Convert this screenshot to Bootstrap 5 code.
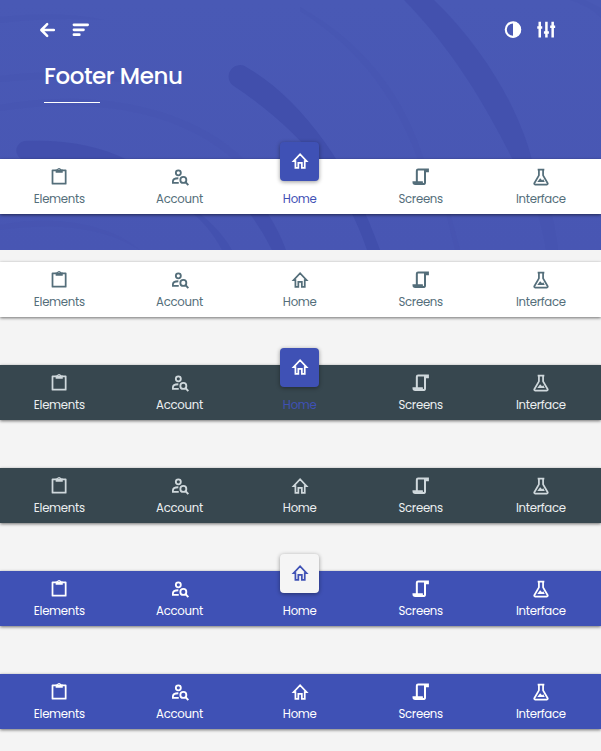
<!DOCTYPE html>
<html lang="en">
<head>
<meta charset="utf-8">
<meta name="viewport" content="width=device-width, initial-scale=1">
<title>Footer Menu</title>
<link href="https://cdn.jsdelivr.net/npm/bootstrap@5.3.0/dist/css/bootstrap.min.css" rel="stylesheet">
<style>
body{background:#f4f4f4;font-family:Poppins,Inter,sans-serif;overflow:hidden;height:751px}
.hero{height:250px;background:linear-gradient(#4959b5,#4856b3);margin-bottom:12px}
.hero-art{position:absolute;inset:0;z-index:0}
.hero-body{position:relative;z-index:1}
.tools{height:60px;padding:0 45px 0 38px}
.tools svg{width:20px;height:20px}
.tools-right{gap:13px}
.tools-left{gap:13px}
.page-title{font-size:23px;font-weight:500;line-height:32px;letter-spacing:-.42px;margin:0 0 10px 44px}
.rule{width:56px;height:1px;background:#fff;margin-left:44px}
.menu-bar{height:55px;margin-bottom:48px;box-shadow:0 1px 3px rgba(0,0,0,.55);background:#fff;color:#546e7a}
.hero .menu-bar{margin:56px 0 0}
.menu-item{width:20%;padding-top:8px;font-size:11.7px;line-height:18px;letter-spacing:-.27px;color:inherit;text-decoration:none}
.menu-item:nth-child(-n+3){padding-right:1.500px}
.menu-item svg{width:20px;height:20px;display:block;margin-bottom:3px}
.bar-dark{background:#37474f;color:#eceff1}
.bar-dark .menu-item svg{color:#cfd8dc}
.bar-blue{background:#3f51b5;color:#fff}
.menu-item .tile{width:39px;height:39px;border-radius:4px;margin:-25px 0 9px;background:#3f51b5;box-shadow:0 1px 4px rgba(0,0,0,.4)}
.menu-item .tile svg,.bar-dark .tile svg{color:#fff;margin:0 0 2px}
.menu-item.chosen{color:#3f51b5}
.bar-blue .menu-item.chosen{color:#fff}
.bar-blue .tile{background:#f5f5f5}
.bar-blue .tile svg{color:#3f51b5}
</style>
<script src="https://cdn.jsdelivr.net/npm/bootstrap@5.3.0/dist/js/bootstrap.bundle.min.js"></script>
</head>
<body>
<svg width="0" height="0" class="position-absolute" aria-hidden="true">
<symbol id="clip" viewBox="0 0 24 24"><path fill="none" stroke="currentColor" stroke-width="2.100" stroke-linejoin="round" d="M4.200 4H20V20H4.200Z"/><path fill="currentColor" d="M8 3h1.600a2.600 2.600 0 0 1 5 0H16.500V7H8zM12 2.300a1 1 0 1 0 0 2 1 1 0 0 0 0-2" fill-rule="evenodd"/></symbol>
<symbol id="acct" viewBox="0 0 24 24"><g fill="none" stroke="currentColor" stroke-width="2.200"><circle cx="10" cy="7" r="3"/><path d="M10 13.500C6 13.500 3.500 15 3.500 17V19h7"/><circle cx="16" cy="15.500" r="3.600"/><path d="M18.500 18l3.500 3.700"/></g></symbol>
<symbol id="home" viewBox="0 0 24 24"><path fill="none" stroke="currentColor" stroke-width="2.100" d="M4.300 12.200H6.500V20.200h3.500v-6h4.200v6h3.500v-8h2.200L12.100 3.800z"/></symbol>
<symbol id="script" viewBox="0 0 24 24"><path fill="none" stroke="currentColor" stroke-width="2.400" d="M7 17V4.500Q7 3 8.500 3H20.300v2H16.800V18.500Q16.800 20.500 14.500 20.500H5Q3 20.500 3 18.300H13Q13 20 14.500 20.500"/></symbol>
<symbol id="flask" viewBox="0 0 24 24"><g fill="none" stroke="currentColor" stroke-width="2.100" stroke-linejoin="round"><path d="M8 3h8M9.500 3v7L4 19.500A1 1 0 0 0 5 21h14a1 1 0 0 0 1-1.500L14.500 10V3"/></g><path fill="currentColor" d="M7.500 18l3.500-4.500 2.300 2.300 1.500-1.100 1.700 3.300z"/></symbol>
</svg>

<header class="hero position-relative text-white">
<svg class="hero-art" width="601" height="250" viewBox="0 0 601 250" aria-hidden="true">
<path fill="#414fac" d="M247 67.500C300 98 350 165 380 250H367C345 184 300 130 233 85.500A10.500 10.500 0 0 1 247 67.500Z"/>
<path fill="#414fac" opacity=".75" d="M404 0H434C486 50 520 112 532 160H513C486 107 455 52 404 0Z"/>
<path fill="#414fac" opacity=".3" d="M532 160C546 185 555 220 558 250H546C541 220 532 190 513 160Z"/>
<path fill="#414fac" opacity=".9" d="M24 141C65 139 100 146 128 160H28A7.500 7.500 0 0 1 24 141ZM250 214H268Q279 231 286 250H272Q262 230 250 214Z"/>
<path fill="#414fac" opacity=".18" d="M0 105C90 88 190 105 245 160H234C175 108 90 98 0 111ZM0 76C60 68 120 75 180 88 110 79 60 76 0 82ZM0 17Q60 11 105 20 50 17 0 23Z"/>
<path fill="#414fac" opacity=".18" d="M300 7C370 47 405 100 424 160H418C398 105 365 52 300 11ZM570 0Q590 6 601 18V8L585 0ZM448 205L460 250H455L444 205ZM0 225C45 216 105 220 140 250 100 225 50 223 0 230Z"/>
<path fill="#414fac" opacity=".6" d="M188 205Q218 225 232 250H222Q207 222 182 205Z"/>
</svg>
<div class="hero-body">
<div class="tools d-flex align-items-center justify-content-between">
<div class="tools-left d-flex align-items-center">
<svg viewBox="0 0 24 24" fill="none" stroke="currentColor" stroke-width="3" stroke-linecap="round" stroke-linejoin="round"><path d="M19 12H4.500M11 5L4 12l7 7"/></svg>
<svg viewBox="0 0 24 24" fill="none" stroke="currentColor" stroke-width="3.200" stroke-linecap="round"><path d="M3.500 5.800H20M3.500 11.800h11.500M3.500 17.600h6.500"/></svg>
</div>
<div class="tools-right d-flex align-items-center">
<svg viewBox="0 0 24 24"><circle cx="12" cy="11.500" r="8.700" fill="none" stroke="currentColor" stroke-width="2.500"/><path fill="currentColor" d="M12 2a9.500 9.500 0 0 1 0 19z"/></svg>
<svg viewBox="0 0 24 24" fill="none" stroke="currentColor" stroke-width="3"><path d="M4.500 2v19M12.500 2v19M20 2v19M1.500 9h6M9.500 15h6M17 8h6"/></svg>
</div>
</div>
<h1 class="page-title">Footer Menu</h1>
<div class="rule"></div>
<nav class="menu-bar d-flex">
<a class="menu-item d-flex flex-column align-items-center"><svg><use href="#clip"/></svg><span>Elements</span></a>
<a class="menu-item d-flex flex-column align-items-center"><svg><use href="#acct"/></svg><span>Account</span></a>
<a class="menu-item chosen d-flex flex-column align-items-center"><span class="tile d-flex align-items-center justify-content-center"><svg><use href="#home"/></svg></span><span>Home</span></a>
<a class="menu-item d-flex flex-column align-items-center"><svg><use href="#script"/></svg><span>Screens</span></a>
<a class="menu-item d-flex flex-column align-items-center"><svg><use href="#flask"/></svg><span>Interface</span></a>
</nav>
</div>
</header>
<nav class="menu-bar d-flex">
<a class="menu-item d-flex flex-column align-items-center"><svg><use href="#clip"/></svg><span>Elements</span></a>
<a class="menu-item d-flex flex-column align-items-center"><svg><use href="#acct"/></svg><span>Account</span></a>
<a class="menu-item d-flex flex-column align-items-center"><svg><use href="#home"/></svg><span>Home</span></a>
<a class="menu-item d-flex flex-column align-items-center"><svg><use href="#script"/></svg><span>Screens</span></a>
<a class="menu-item d-flex flex-column align-items-center"><svg><use href="#flask"/></svg><span>Interface</span></a>
</nav>
<nav class="menu-bar bar-dark d-flex">
<a class="menu-item d-flex flex-column align-items-center"><svg><use href="#clip"/></svg><span>Elements</span></a>
<a class="menu-item d-flex flex-column align-items-center"><svg><use href="#acct"/></svg><span>Account</span></a>
<a class="menu-item chosen d-flex flex-column align-items-center"><span class="tile d-flex align-items-center justify-content-center"><svg><use href="#home"/></svg></span><span>Home</span></a>
<a class="menu-item d-flex flex-column align-items-center"><svg><use href="#script"/></svg><span>Screens</span></a>
<a class="menu-item d-flex flex-column align-items-center"><svg><use href="#flask"/></svg><span>Interface</span></a>
</nav>
<nav class="menu-bar bar-dark d-flex">
<a class="menu-item d-flex flex-column align-items-center"><svg><use href="#clip"/></svg><span>Elements</span></a>
<a class="menu-item d-flex flex-column align-items-center"><svg><use href="#acct"/></svg><span>Account</span></a>
<a class="menu-item d-flex flex-column align-items-center"><svg><use href="#home"/></svg><span>Home</span></a>
<a class="menu-item d-flex flex-column align-items-center"><svg><use href="#script"/></svg><span>Screens</span></a>
<a class="menu-item d-flex flex-column align-items-center"><svg><use href="#flask"/></svg><span>Interface</span></a>
</nav>
<nav class="menu-bar bar-blue d-flex">
<a class="menu-item d-flex flex-column align-items-center"><svg><use href="#clip"/></svg><span>Elements</span></a>
<a class="menu-item d-flex flex-column align-items-center"><svg><use href="#acct"/></svg><span>Account</span></a>
<a class="menu-item chosen d-flex flex-column align-items-center"><span class="tile d-flex align-items-center justify-content-center"><svg><use href="#home"/></svg></span><span>Home</span></a>
<a class="menu-item d-flex flex-column align-items-center"><svg><use href="#script"/></svg><span>Screens</span></a>
<a class="menu-item d-flex flex-column align-items-center"><svg><use href="#flask"/></svg><span>Interface</span></a>
</nav>
<nav class="menu-bar bar-blue d-flex">
<a class="menu-item d-flex flex-column align-items-center"><svg><use href="#clip"/></svg><span>Elements</span></a>
<a class="menu-item d-flex flex-column align-items-center"><svg><use href="#acct"/></svg><span>Account</span></a>
<a class="menu-item d-flex flex-column align-items-center"><svg><use href="#home"/></svg><span>Home</span></a>
<a class="menu-item d-flex flex-column align-items-center"><svg><use href="#script"/></svg><span>Screens</span></a>
<a class="menu-item d-flex flex-column align-items-center"><svg><use href="#flask"/></svg><span>Interface</span></a>
</nav>
</body>
</html>
